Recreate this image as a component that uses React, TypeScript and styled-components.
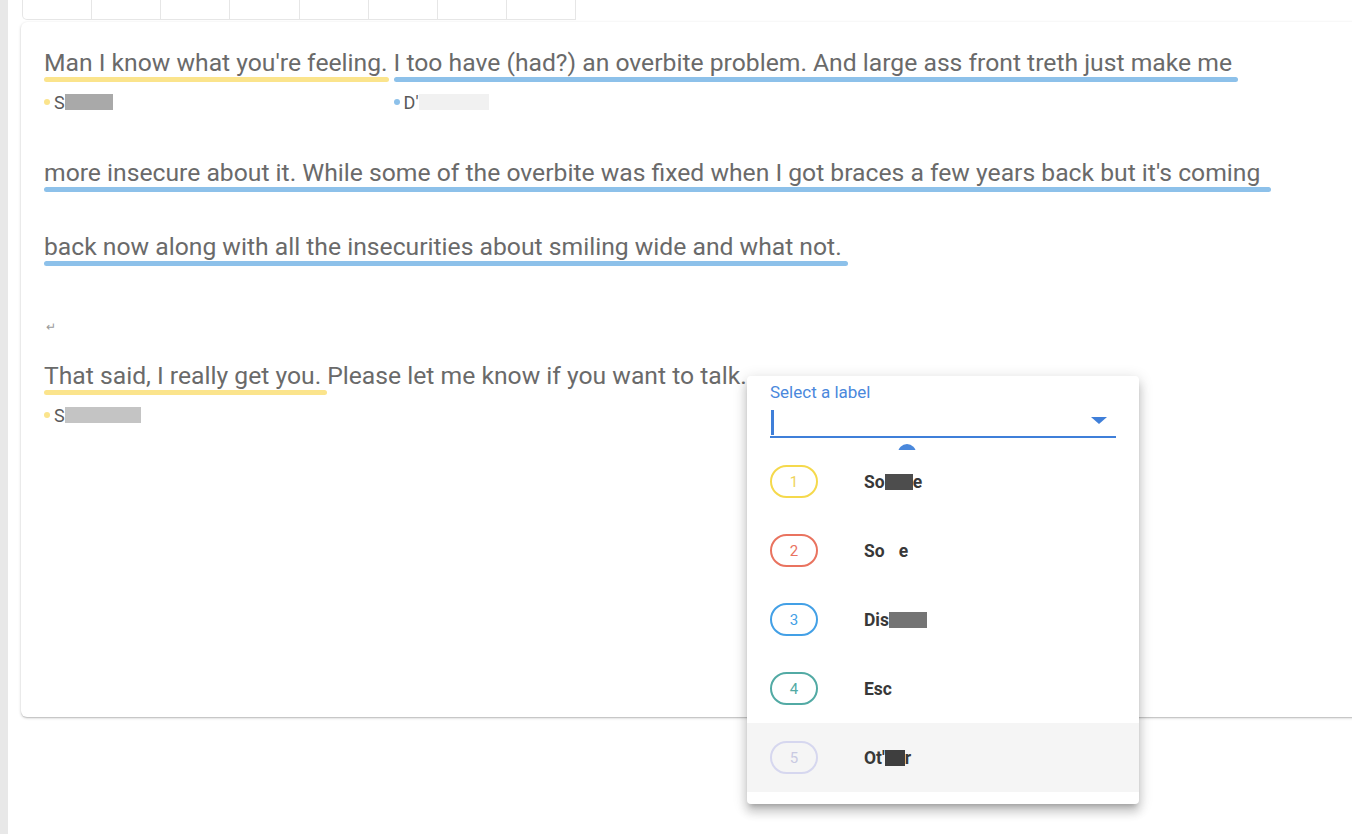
import React from "react";
import styled, { createGlobalStyle } from "styled-components";

const GlobalStyle = createGlobalStyle`
  body {
    margin: 0;
    background: #ffffff;
    font-family: Roboto, "Liberation Sans", sans-serif;
  }
`;

const YELLOW = "#fbe48c";
const BLUE = "#8dc1ea";

const labels = [
  { id: 1, color: "#f5d94c", text: "#efd45a" },
  { id: 2, color: "#e9735f", text: "#e9735f" },
  { id: 3, color: "#43a0e6", text: "#43a0e6" },
  { id: 4, color: "#52aaa4", text: "#52aaa4" },
  { id: 5, color: "#d6d7ef", text: "#c9cae2" },
];

const App = () => {
  return (
    <>
      <GlobalStyle />
      <Page>
        <SideStrip />
        <Main>
          <Toolbar>
            {Array.from({ length: 8 }).map((_, i) => (
              <ToolCell key={i} first={i === 0} />
            ))}
          </Toolbar>
          <Card>
            <Line top={0}>
              <Segment>
                <SegText>Man I know what you're feeling.</SegText>
                <Bar color={YELLOW} trim={5} />
                <Tag>
                  <Dot color={YELLOW} />S
                  <Blot w={48} tone="#a9a9a9" />
                </Tag>
              </Segment>
              <Segment>
                <SegText>I too have (had?) an overbite problem. And large ass front treth just make me</SegText>
                <Bar color={BLUE} trim={0} />
                <Tag>
                  <Dot color={BLUE} />D'
                  <Blot w={70} tone="#f1f1f1" />
                </Tag>
              </Segment>
            </Line>
            <Line top={47}>
              <Segment>
                <SegText>
                  more insecure about it. While some of the overbite was fixed when I got braces a few years back but it's coming
                </SegText>
                <Bar color={BLUE} trim={-5} />
              </Segment>
            </Line>
            <Line top={40}>
              <Segment>
                <SegText>back now along with all the insecurities about smiling wide and what not.</SegText>
                <Bar color={BLUE} trim={0} />
              </Segment>
            </Line>
            <Return>↵</Return>
            <Line top={26}>
              <Segment>
                <SegText>That said, I really get you.</SegText>
                <Bar color={YELLOW} trim={0} />
                <Tag>
                  <Dot color={YELLOW} />S
                  <Blot w={76} tone="#c4c4c4" />
                </Tag>
              </Segment>
              <Plain>Please let me know if you want to talk.</Plain>
            </Line>

            <Menu>
              <Field>
                <FieldLabel>Select a label</FieldLabel>
                <InputRow>
                  <Caret />
                  <Arrow />
                </InputRow>
              </Field>
              <Knob />
              <OptionList>
                {labels.map((l) => (
                  <Option key={l.id} active={l.id === 5}>
                    <Badge color={l.color} textColor={l.text}>
                      {l.id}
                    </Badge>
                    <OptionText>
                      {l.id === 1 && (
                        <>
                          So<Blot w={28} tone="#4d4d4d" />e
                        </>
                      )}
                      {l.id === 2 && (
                        <>
                          So<Gap />e
                        </>
                      )}
                      {l.id === 3 && (
                        <>
                          Dis<Blot w={38} tone="#747474" />
                        </>
                      )}
                      {l.id === 4 && <>Esc</>}
                      {l.id === 5 && (
                        <>
                          Ot'<Blot w={20} tone="#3e3e3e" />r
                        </>
                      )}
                    </OptionText>
                  </Option>
                ))}
              </OptionList>
            </Menu>
          </Card>
        </Main>
      </Page>
    </>
  );
};

export default App;

const Page = styled.div`
  display: flex;
  width: 1352px;
  height: 834px;
  overflow: hidden;
`;

const SideStrip = styled.div`
  width: 8px;
  flex-shrink: 0;
  background: #e8e8e8;
`;

const Main = styled.div`
  flex: 1;
  padding-left: 13px;
`;

const Toolbar = styled.div`
  display: flex;
  width: 554px;
  height: 20px;
  margin-left: 1px;
`;

const ToolCell = styled.div<{ first: boolean }>`
  flex: 1;
  border: 1px solid #e6e6e6;
  border-top: none;
  border-left: ${(p) => (p.first ? "1px solid #e6e6e6" : "none")};
  border-bottom-left-radius: ${(p) => (p.first ? "5px" : "0")};
`;

const Card = styled.div`
  position: relative;
  width: 1360px;
  height: 695px;
  margin-top: 2px;
  padding: 26px 0 0 23px;
  box-sizing: border-box;
  background: #ffffff;
  border-radius: 6px;
  box-shadow: 0 1px 3px rgba(0, 0, 0, 0.22), 0 1px 1px rgba(0, 0, 0, 0.1);
`;

const Line = styled.div<{ top: number }>`
  display: flex;
  align-items: flex-start;
  margin-top: ${(p) => p.top}px;
  font-size: 24.7px;
  color: #6a6a6a;
  white-space: nowrap;
`;

const Segment = styled.div`
  display: flex;
  flex-direction: column;
  align-items: stretch;
`;

const SegText = styled.span`
  line-height: 30px;
  padding-right: 6px;
`;

const Plain = styled.span`
  line-height: 30px;
`;

// trim pulls the underline's right end in (positive) or out (negative)
const Bar = styled.div<{ color: string; trim: number }>`
  height: 5px;
  margin-top: -1px;
  margin-right: ${(p) => p.trim}px;
  border-radius: 3px;
  background: ${(p) => p.color};
`;

const Tag = styled.div`
  display: flex;
  align-items: center;
  margin-top: 11px;
  height: 18px;
  font-size: 18px;
  color: #5a5a5a;
`;

const Dot = styled.span<{ color: string }>`
  width: 6px;
  height: 6px;
  border-radius: 50%;
  margin-right: 4px;
  background: ${(p) => p.color};
`;

const Blot = styled.span<{ w: number; tone: string }>`
  display: inline-block;
  width: ${(p) => p.w}px;
  height: 16px;
  background: ${(p) => p.tone};
`;

const Gap = styled.span`
  display: inline-block;
  width: 14px;
`;

const Return = styled.div`
  margin-top: 53px;
  padding-left: 2px;
  height: 16px;
  line-height: 16px;
  font-size: 12px;
  color: #9a9a9a;
`;

const Menu = styled.div`
  position: absolute;
  left: 726px;
  top: 354px;
  width: 392px;
  height: 428px;
  background: #ffffff;
  border-radius: 4px;
  box-shadow: 0 5px 5px -3px rgba(0, 0, 0, 0.2), 0 8px 10px 1px rgba(0, 0, 0, 0.14),
    0 3px 14px 2px rgba(0, 0, 0, 0.12);
  display: flex;
  flex-direction: column;
`;

const Field = styled.div`
  padding: 5px 23px 0;
`;

const FieldLabel = styled.div`
  font-size: 17px;
  line-height: 22px;
  color: #4a88dc;
`;

const InputRow = styled.div`
  display: flex;
  align-items: center;
  justify-content: space-between;
  height: 33px;
  border-bottom: 2.5px solid #3f7fd9;
`;

const Caret = styled.div`
  width: 2.5px;
  height: 25px;
  margin-top: 6px;
  margin-left: 1px;
  background: #3f7fd9;
`;

const Arrow = styled.div`
  width: 0;
  height: 0;
  margin-right: 9px;
  margin-top: 2px;
  border-left: 8px solid transparent;
  border-right: 8px solid transparent;
  border-top: 7px solid #3f7fd9;
`;

const Knob = styled.div`
  align-self: flex-start;
  margin-left: 151px;
  margin-top: 6px;
  width: 18px;
  height: 6px;
  overflow: hidden;
  &::before {
    content: "";
    display: block;
    width: 18px;
    height: 18px;
    border-radius: 50%;
    background: #4a88dc;
  }
`;

const OptionList = styled.div`
  display: flex;
  flex-direction: column;
  margin-top: -3px;
`;

const Option = styled.div<{ active: boolean }>`
  display: flex;
  align-items: center;
  height: 69px;
  padding-left: 23px;
  background: ${(p) => (p.active ? "#f5f5f5" : "transparent")};
`;

const Badge = styled.div<{ color: string; textColor: string }>`
  display: flex;
  align-items: center;
  justify-content: center;
  width: 48px;
  height: 33px;
  box-sizing: border-box;
  border: 2px solid ${(p) => p.color};
  border-radius: 17px;
  font-size: 15px;
  color: ${(p) => p.textColor};
`;

const OptionText = styled.div`
  display: flex;
  align-items: center;
  margin-left: 46px;
  font-size: 17.5px;
  font-weight: 700;
  color: #383838;
`;
